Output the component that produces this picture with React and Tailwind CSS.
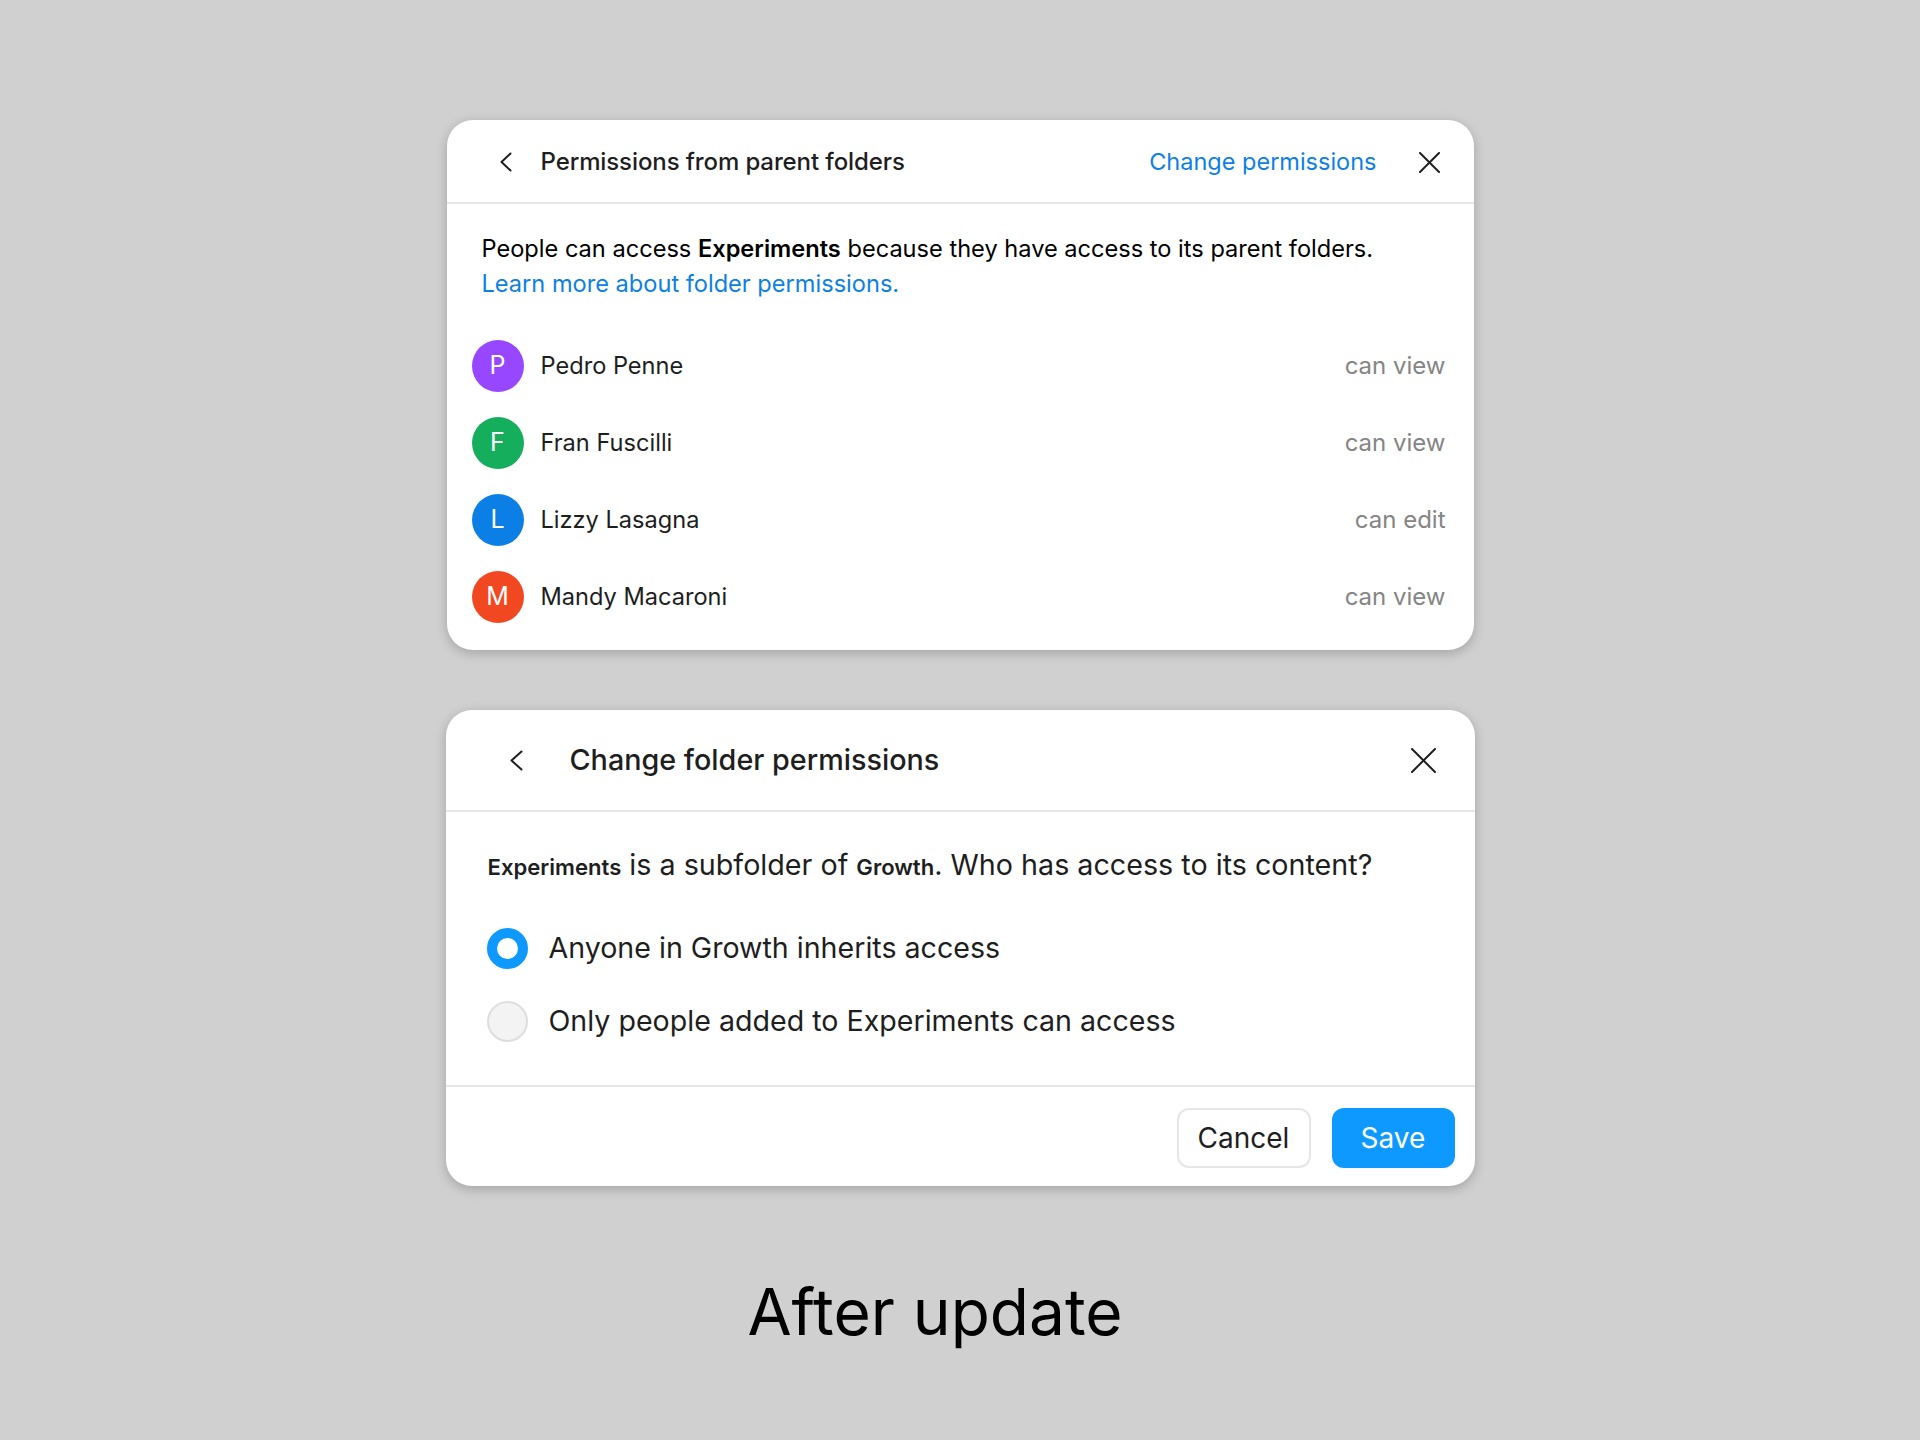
import { useState } from 'react';

const people = [
  { initial: 'P', name: 'Pedro Penne', role: 'can view', color: 'bg-[#9747ff]' },
  { initial: 'F', name: 'Fran Fuscilli', role: 'can view', color: 'bg-[#14ae5c]' },
  { initial: 'L', name: 'Lizzy Lasagna', role: 'can edit', color: 'bg-[#0c7fe6]' },
  { initial: 'M', name: 'Mandy Macaroni', role: 'can view', color: 'bg-[#f24822]' },
];

function Chevron({ w = 12, h = 20 }) {
  return (
    <svg width={w} height={h} viewBox={`0 0 ${w} ${h}`} fill="none" className="shrink-0">
      <polyline
        points={`${w - 1.5},1.5 1.5,${h / 2} ${w - 1.5},${h - 1.5}`}
        stroke="#1e1e1e"
        strokeWidth="2"
        strokeLinecap="round"
        strokeLinejoin="round"
      />
    </svg>
  );
}

function CloseIcon({ size = 21 }) {
  return (
    <svg width={size} height={size} viewBox={`0 0 ${size} ${size}`} fill="none" className="shrink-0">
      <line x1="1" y1="1" x2={size - 1} y2={size - 1} stroke="#1e1e1e" strokeWidth="2" strokeLinecap="round" />
      <line x1={size - 1} y1="1" x2="1" y2={size - 1} stroke="#1e1e1e" strokeWidth="2" strokeLinecap="round" />
    </svg>
  );
}

function ParentPermissions() {
  return (
    <div className="w-[1027px] bg-white rounded-[26px] shadow-[0_3px_12px_rgba(0,0,0,0.22)] overflow-hidden">
      {/* Header */}
      <div className="h-[84px] flex items-center border-b-2 border-[#e6e6e6] pt-[2px] pl-[53px] pr-[34px]">
        <Chevron w={12} h={20} />
        <span className="ml-[29px] text-[24px] font-medium text-[#1e1e1e] tracking-[-0.1px]">
          Permissions from parent folders
        </span>
        <span className="ml-auto text-[23.5px] text-[#0c7fe6]">Change permissions</span>
        <span className="ml-[42px] flex">
          <CloseIcon size={21} />
        </span>
      </div>

      {/* Body */}
      <div className="pt-[27px] pb-[15px]">
        <p className="pl-[35px] pr-[28px] text-[23.6px] leading-[35px] text-[#000]">
          People can access <span className="font-semibold">Experiments</span> because they have access to its parent folders.
          <br />
          <span className="text-[#0c7fe6]">Learn more about folder permissions.</span>
        </p>

        <div className="mt-[26px] flex flex-col">
          {people.map((p) => (
            <div key={p.name} className="h-[77px] flex items-center pl-[25px] pr-[28px]">
              <div
                className={`w-[52px] h-[52px] rounded-full ${p.color} flex items-center justify-center text-white text-[25px]`}
              >
                {p.initial}
              </div>
              <span className="ml-[17px] text-[23.6px] text-[#1e1e1e]">{p.name}</span>
              <span className="ml-auto text-[24px] text-[#858585]">{p.role}</span>
            </div>
          ))}
        </div>
      </div>
    </div>
  );
}

function Radio({ checked }) {
  return checked ? (
    <span className="w-[41px] h-[41px] rounded-full border-[10px] border-[#0d99ff] bg-white shrink-0" />
  ) : (
    <span className="w-[41px] h-[41px] rounded-full border-2 border-[#dedede] bg-[#f3f3f3] shrink-0" />
  );
}

function ChangePermissions() {
  const [choice, setChoice] = useState('inherit');
  const options = [
    { id: 'inherit', label: 'Anyone in Growth inherits access' },
    { id: 'only', label: 'Only people added to Experiments can access' },
  ];

  return (
    <div className="w-[1029px] bg-white rounded-[26px] shadow-[0_3px_12px_rgba(0,0,0,0.22)] overflow-hidden">
      {/* Header */}
      <div className="h-[102px] flex items-center border-b-2 border-[#e6e6e6] pl-[64px] pr-[39px]">
        <Chevron w={13} h={21} />
        <span className="ml-[47px] text-[28.75px] font-medium text-[#1e1e1e]">Change folder permissions</span>
        <span className="ml-auto flex">
          <CloseIcon size={25} />
        </span>
      </div>

      {/* Body */}
      <div className="pt-[35px] pb-[27px]">
        <p className="pl-[42px] text-[28.7px] leading-[36px] text-[#1e1e1e]">
          <span className="text-[22.1px] font-semibold">Experiments</span> is a subfolder of{' '}
          <span className="text-[22.1px] font-semibold">Growth</span>. Who has access to its content?
        </p>

        <div className="mt-[27px] flex flex-col">
          {options.map((o) => (
            <button
              key={o.id}
              onClick={() => setChoice(o.id)}
              className="h-[73px] flex items-center pl-[41px] text-left"
            >
              <Radio checked={choice === o.id} />
              <span className="ml-[21px] text-[28.6px] text-[#1e1e1e]">{o.label}</span>
            </button>
          ))}
        </div>
      </div>

      {/* Footer */}
      <div className="h-[101px] border-t-2 border-[#e6e6e6] flex items-center justify-end gap-[21px] pr-[20px] pt-[3px]">
        <button className="w-[134px] h-[60px] rounded-[12px] border-2 border-[#e6e6e6] bg-white text-[28px] text-[#1e1e1e]">
          Cancel
        </button>
        <button className="w-[123px] h-[60px] rounded-[12px] bg-[#0d99ff] text-[28px] text-white">Save</button>
      </div>
    </div>
  );
}

export default function App() {
  return (
    <div className="w-[1920px] h-[1440px] bg-[#d0d0d0] font-['Inter',sans-serif] flex flex-col items-center pt-[120px]">
      <ParentPermissions />
      <div className="mt-[60px]">
        <ChangePermissions />
      </div>
      <h1 className="mt-[94px] mr-[50px] text-[64px] leading-none font-normal text-black">After update</h1>
    </div>
  );
}
